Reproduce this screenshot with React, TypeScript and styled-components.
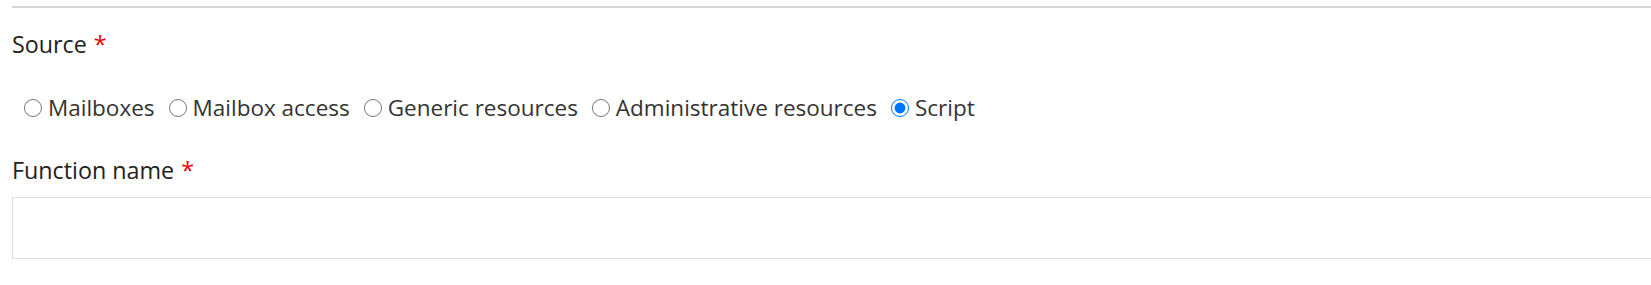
import { useState } from "react";
import styled, { createGlobalStyle } from "styled-components";

const GlobalStyle = createGlobalStyle`
  html, body {
    margin: 0;
    padding: 0;
    background: #fff;
    overflow: hidden;
  }
  body {
    font-family: "Open Sans", "Noto Sans", sans-serif;
    color: #333;
  }
`;

const Form = styled.div`
  padding: 6px 0 0 12px;
  width: 1680px;
`;

const Divider = styled.hr`
  margin: 0;
  border: none;
  border-top: 2px solid #d6d6d6;
`;

const Field = styled.div`
  display: flex;
  flex-direction: column;
`;

const Label = styled.label<{ $top: number }>`
  margin-top: ${(p) => p.$top}px;
  font-size: 23.3px;
  font-weight: 500;
  color: #222;
  line-height: 30px;
`;

const Required = styled.span`
  color: #e00;
  margin-left: 7px;
`;

const RadioRow = styled.div`
  display: flex;
  align-items: center;
  margin-top: 34px;
  padding-left: 12px;
  gap: 14px;
`;

const Option = styled.label`
  display: flex;
  align-items: center;
  gap: 6px;
  font-size: 22.5px;
  color: #333;
  line-height: 30px;
  cursor: pointer;
`;

const Radio = styled.input`
  width: 18px;
  height: 18px;
  margin: 0;
  accent-color: #0075ff;
`;

const TextInput = styled.input`
  margin-top: 12px;
  height: 62px;
  box-sizing: border-box;
  border: 1px solid #dedede;
  border-radius: 0;
  font-family: inherit;
  font-size: 20px;
  padding: 0 12px;
  outline: none;
`;

const sources = [
  "Mailboxes",
  "Mailbox access",
  "Generic resources",
  "Administrative resources",
  "Script",
];

export default function App() {
  const [source, setSource] = useState("Script");

  return (
    <>
      <GlobalStyle />
      <Form>
        <Divider />
        <Field>
          <Label $top={21}>
            Source<Required>*</Required>
          </Label>
          <RadioRow>
            {sources.map((s) => (
              <Option key={s}>
                <Radio
                  type="radio"
                  name="source"
                  checked={source === s}
                  onChange={() => setSource(s)}
                />
                {s}
              </Option>
            ))}
          </RadioRow>
        </Field>
        <Field>
          <Label $top={32}>
            Function name<Required>*</Required>
          </Label>
          <TextInput type="text" />
        </Field>
      </Form>
    </>
  );
}
